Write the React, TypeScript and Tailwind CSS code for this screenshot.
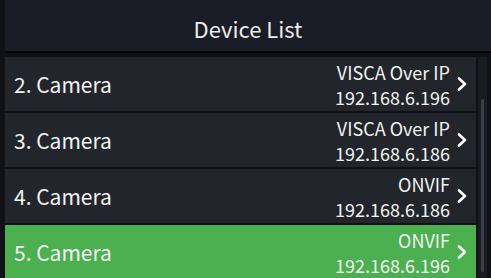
import React from 'react';

interface Device {
  name: string;
  protocol: string;
  ip: string;
  active?: boolean;
}

const devices: Device[] = [
  { name: '2. Camera', protocol: 'VISCA Over IP', ip: '192.168.6.196' },
  { name: '3. Camera', protocol: 'VISCA Over IP', ip: '192.168.6.186' },
  { name: '4. Camera', protocol: 'ONVIF', ip: '192.168.6.186' },
  { name: '5. Camera', protocol: 'ONVIF', ip: '192.168.6.196', active: true },
];

const Chevron = () => (
  <svg width="12" height="16" viewBox="0 0 12 16" fill="none">
    <path d="M3 2.5 L9 8 L3 13.5" stroke="white" strokeWidth="2.6" strokeLinecap="round" strokeLinejoin="round" />
  </svg>
);

const DeviceRow: React.FC<{ device: Device }> = ({ device }) => (
  <div
    className={
      'flex h-[54px] shrink-0 items-center pl-[9px] pr-[8px] ' +
      (device.active ? 'bg-[#4caf50]' : 'bg-[#22252c]')
    }
  >
    <span className="flex-1 pt-[2px] text-[21px] text-[#f2f2f2]">{device.name}</span>
    <div className="flex flex-col items-end pt-[2px] text-[18px] leading-[25px] text-[#f2f2f2]">
      <span>{device.protocol}</span>
      <span>{device.ip}</span>
    </div>
    <div className="ml-[6px] flex items-center">
      <Chevron />
    </div>
  </div>
);

export default function App() {
  return (
    <div
      className="flex h-[278px] w-[491px] flex-col overflow-hidden bg-[#101116] pl-[5px]"
      style={{ fontFamily: '"Noto Sans CJK SC", "Noto Sans", sans-serif' }}
    >
      {/* Header */}
      <div className="flex h-[51px] shrink-0 items-center justify-center bg-[#1b1d26] pt-[6px] text-[22px] text-[#ececec]">
        Device List
      </div>
      <div className="h-[2px] shrink-0 bg-[#050507]" />

      {/* List + scrollbar */}
      <div className="flex min-h-0 flex-1 pt-[4px]">
        <div className="flex w-[471px] flex-col gap-[2px] overflow-hidden">
          {devices.map((d) => (
            <DeviceRow key={d.name} device={d} />
          ))}
        </div>
        <div className="ml-[2px] flex w-[9px] flex-col bg-[#1a1c22] pb-[6px] pt-[42px]">
          <div className="mx-auto w-[3px] flex-1 rounded-full bg-[#3a3d45]" />
        </div>
      </div>
    </div>
  );
}
